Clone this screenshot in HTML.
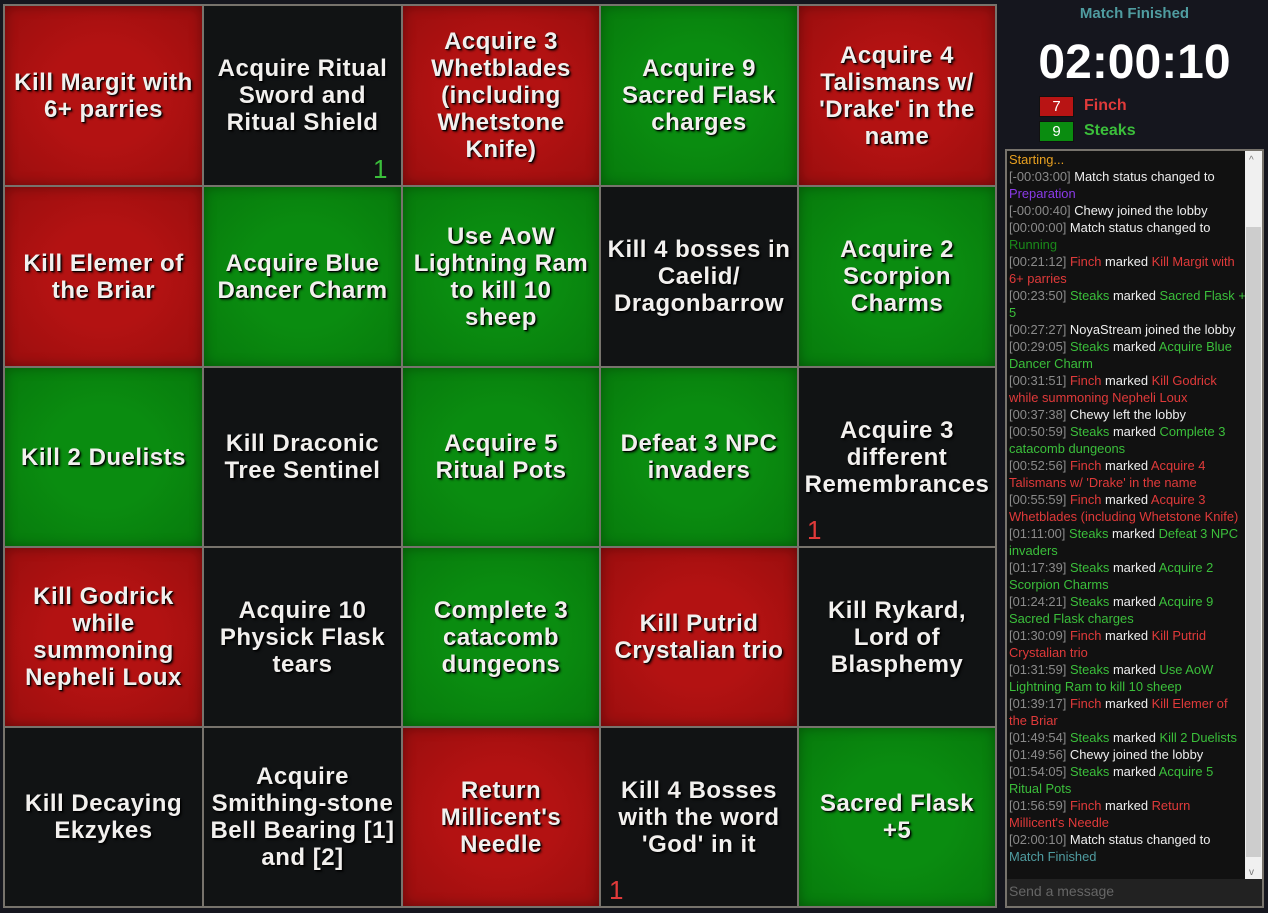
<!DOCTYPE html>
<html><head><meta charset="utf-8"><style>
*{margin:0;padding:0;box-sizing:border-box}
body{width:1268px;height:913px;background:#15161e;overflow:hidden;font-family:"Liberation Sans","DejaVu Sans",sans-serif;position:relative}
#grid{position:absolute;left:3px;top:4px;width:994px;height:904px;background:#77736c;display:grid;grid-template-columns:197px 197px 196px 196px 196px;grid-template-rows:179px 179px 178px 178px 178px;gap:2px;padding:2px}
.c{display:flex;align-items:center;justify-content:center;text-align:center;color:#f2f0ee;font-weight:bold;font-size:24px;letter-spacing:0.5px;line-height:27px;white-space:nowrap;text-shadow:1px 1px 1px #000,2px 2px 2px rgba(0,0,0,.6);position:relative}
.r{background:radial-gradient(ellipse at center,#b31212 40%,#9a0e0e 100%);box-shadow:inset 0 0 12px rgba(0,0,0,.35)}
.g{background:radial-gradient(ellipse at center,#0a8c10 40%,#077a0c 100%);box-shadow:inset 0 0 12px rgba(0,0,0,.3)}
.b{background:#111314}
.n{position:absolute;font-size:26px;font-weight:normal;text-shadow:none}
.mf{position:absolute;left:1005px;width:259px;top:5px;text-align:center;color:#4f9ca0;font-weight:bold;font-size:15px}
.time{position:absolute;left:1005px;width:259px;top:33px;text-align:center;color:#fff;font-weight:bold;font-size:48px;line-height:60px}
.sc{position:absolute;left:1039px;width:35px;height:21px;color:#fff;font-size:15px;text-align:center;line-height:20px;border:1px solid #111}
.nm{position:absolute;left:1084px;font-weight:bold;font-size:16px}
#log{position:absolute;left:1005px;top:149px;width:259px;height:759px;border:2px solid #77736c;background:#111}
#lines{position:absolute;left:2px;top:0;width:238px;font-size:12.9px;line-height:17px;color:#eee}
.t{color:#8a8a8a}.R{color:#e03a3a}.G{color:#3bbf3b}
#sb{position:absolute;right:0;top:0;width:17px;height:729px;background:#f0f0f0}
#thumb{position:absolute;left:1px;top:76px;width:15px;height:630px;background:#cdcdcd}
#inp{position:absolute;left:0;bottom:0;width:255px;height:27px;background:#222;color:#666;font-size:14px;line-height:25px;padding-left:2px}
</style></head><body>
<div id="grid">
<div class="c r">Kill Margit with<br>6+ parries</div>
<div class="c b">Acquire Ritual<br>Sword and<br>Ritual Shield<span class="n" style="right:13px;bottom:2px;color:#3bbf3b">1</span></div>
<div class="c r">Acquire 3<br>Whetblades<br>(including<br>Whetstone<br>Knife)</div>
<div class="c g">Acquire 9<br>Sacred Flask<br>charges</div>
<div class="c r">Acquire 4<br>Talismans w/<br>'Drake' in the<br>name</div>
<div class="c r">Kill Elemer of<br>the Briar</div>
<div class="c g">Acquire Blue<br>Dancer Charm</div>
<div class="c g">Use AoW<br>Lightning Ram<br>to kill 10<br>sheep</div>
<div class="c b">Kill 4 bosses in<br>Caelid/<br>Dragonbarrow</div>
<div class="c g">Acquire 2<br>Scorpion<br>Charms</div>
<div class="c g">Kill 2 Duelists</div>
<div class="c b">Kill Draconic<br>Tree Sentinel</div>
<div class="c g">Acquire 5<br>Ritual Pots</div>
<div class="c g">Defeat 3 NPC<br>invaders</div>
<div class="c b">Acquire 3<br>different<br>Remembrances<span class="n" style="left:8px;bottom:2px;color:#e03a3a">1</span></div>
<div class="c r">Kill Godrick<br>while<br>summoning<br>Nepheli Loux</div>
<div class="c b">Acquire 10<br>Physick Flask<br>tears</div>
<div class="c g">Complete 3<br>catacomb<br>dungeons</div>
<div class="c r">Kill Putrid<br>Crystalian trio</div>
<div class="c b">Kill Rykard,<br>Lord of<br>Blasphemy</div>
<div class="c b">Kill Decaying<br>Ekzykes</div>
<div class="c b">Acquire<br>Smithing-stone<br>Bell Bearing [1]<br>and [2]</div>
<div class="c r">Return<br>Millicent's<br>Needle</div>
<div class="c b">Kill 4 Bosses<br>with the word<br>'God' in it<span class="n" style="left:8px;bottom:2px;color:#e03a3a">1</span></div>
<div class="c g">Sacred Flask<br>+5</div>
</div>
<div class="mf">Match Finished</div>
<div class="time">02:00:10</div>
<div class="sc" style="top:96px;background:#b81414">7</div><div class="nm R" style="top:97px">Finch</div>
<div class="sc" style="top:121px;background:#0a8c10">9</div><div class="nm G" style="top:122px">Steaks</div>
<div id="log">
<div id="lines">
<div style="color:#e8a020">Starting...</div>
<div><span class="t">[-00:03:00]</span> Match status changed to <span style="color:#8a3ae8">Preparation</span></div>
<div><span class="t">[-00:00:40]</span> Chewy joined the lobby</div>
<div><span class="t">[00:00:00]</span> Match status changed to <span style="color:#1a8a1a">Running</span></div>
<div><span class="t">[00:21:12]</span> <span class="R">Finch</span> marked <span class="R">Kill Margit with<br>6+ parries</span></div>
<div><span class="t">[00:23:50]</span> <span class="G">Steaks</span> marked <span class="G">Sacred Flask +<br>5</span></div>
<div><span class="t">[00:27:27]</span> NoyaStream joined the lobby</div>
<div><span class="t">[00:29:05]</span> <span class="G">Steaks</span> marked <span class="G">Acquire Blue<br>Dancer Charm</span></div>
<div><span class="t">[00:31:51]</span> <span class="R">Finch</span> marked <span class="R">Kill Godrick<br>while summoning Nepheli Loux</span></div>
<div><span class="t">[00:37:38]</span> Chewy left the lobby</div>
<div><span class="t">[00:50:59]</span> <span class="G">Steaks</span> marked <span class="G">Complete 3<br>catacomb dungeons</span></div>
<div><span class="t">[00:52:56]</span> <span class="R">Finch</span> marked <span class="R">Acquire 4<br>Talismans w/ 'Drake' in the name</span></div>
<div><span class="t">[00:55:59]</span> <span class="R">Finch</span> marked <span class="R">Acquire 3<br>Whetblades (including Whetstone Knife)</span></div>
<div><span class="t">[01:11:00]</span> <span class="G">Steaks</span> marked <span class="G">Defeat 3 NPC<br>invaders</span></div>
<div><span class="t">[01:17:39]</span> <span class="G">Steaks</span> marked <span class="G">Acquire 2<br>Scorpion Charms</span></div>
<div><span class="t">[01:24:21]</span> <span class="G">Steaks</span> marked <span class="G">Acquire 9<br>Sacred Flask charges</span></div>
<div><span class="t">[01:30:09]</span> <span class="R">Finch</span> marked <span class="R">Kill Putrid<br>Crystalian trio</span></div>
<div><span class="t">[01:31:59]</span> <span class="G">Steaks</span> marked <span class="G">Use AoW<br>Lightning Ram to kill 10 sheep</span></div>
<div><span class="t">[01:39:17]</span> <span class="R">Finch</span> marked <span class="R">Kill Elemer of<br>the Briar</span></div>
<div><span class="t">[01:49:54]</span> <span class="G">Steaks</span> marked <span class="G">Kill 2 Duelists</span></div>
<div><span class="t">[01:49:56]</span> Chewy joined the lobby</div>
<div><span class="t">[01:54:05]</span> <span class="G">Steaks</span> marked <span class="G">Acquire 5<br>Ritual Pots</span></div>
<div><span class="t">[01:56:59]</span> <span class="R">Finch</span> marked <span class="R">Return<br>Millicent's Needle</span></div>
<div><span class="t">[02:00:10]</span> Match status changed to<br><span style="color:#4f9ca0">Match Finished</span></div>
</div>
<div id="sb"><div style="position:absolute;top:4px;left:4px;color:#777;font-size:10px">^</div><div id="thumb"></div><div style="position:absolute;bottom:2px;left:4px;color:#777;font-size:10px">v</div></div>
<div id="inp">Send a message</div>
</div>
</body></html>
